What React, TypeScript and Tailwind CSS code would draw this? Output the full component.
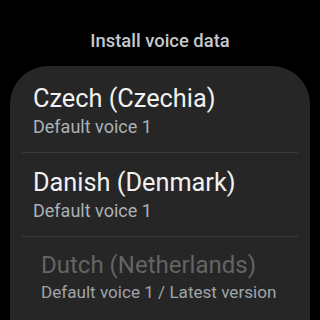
const items = [
  { name: 'Czech (Czechia)', detail: 'Default voice 1' },
  { name: 'Danish (Denmark)', detail: 'Default voice 1' },
];

export default function App() {
  return (
    <div
      className="flex h-[320px] w-[320px] flex-col overflow-hidden bg-black"
      style={{ fontFamily: 'Roboto, "Noto Sans", sans-serif' }}
    >
      <div className="pt-[30px] text-center text-[18.4px] font-medium leading-[22px] text-[#c4c9cf]">
        Install voice data
      </div>
      <div className="mx-[10px] mt-[14px] flex-1 rounded-t-[38px] bg-[#262626]">
        {items.map((item, i) => (
          <div key={item.name}>
            <div className={i === 0 ? 'pl-[23px] pt-[18px] pb-[14px]' : 'pl-[23px] pt-[15px] pb-[14px]'}>
              <div className="text-[25.3px] leading-[30px] text-[#f1f1f1]">{item.name}</div>
              <div className="mt-[2px] text-[18px] leading-[22px] text-[#abb1b8]">{item.detail}</div>
            </div>
            <div className="mx-[12px] h-px bg-[#3a3a3a]" />
          </div>
        ))}
        {/* disabled row, already installed */}
        <div className="pl-[31px] pt-[14px]">
          <div className="text-[24px] leading-[28px] text-[#646464]">Dutch (Netherlands)</div>
          <div className="mt-[3px] text-[17.1px] leading-[20px] text-[#9fa4aa]">
            Default voice 1 / Latest version
          </div>
        </div>
      </div>
    </div>
  );
}
